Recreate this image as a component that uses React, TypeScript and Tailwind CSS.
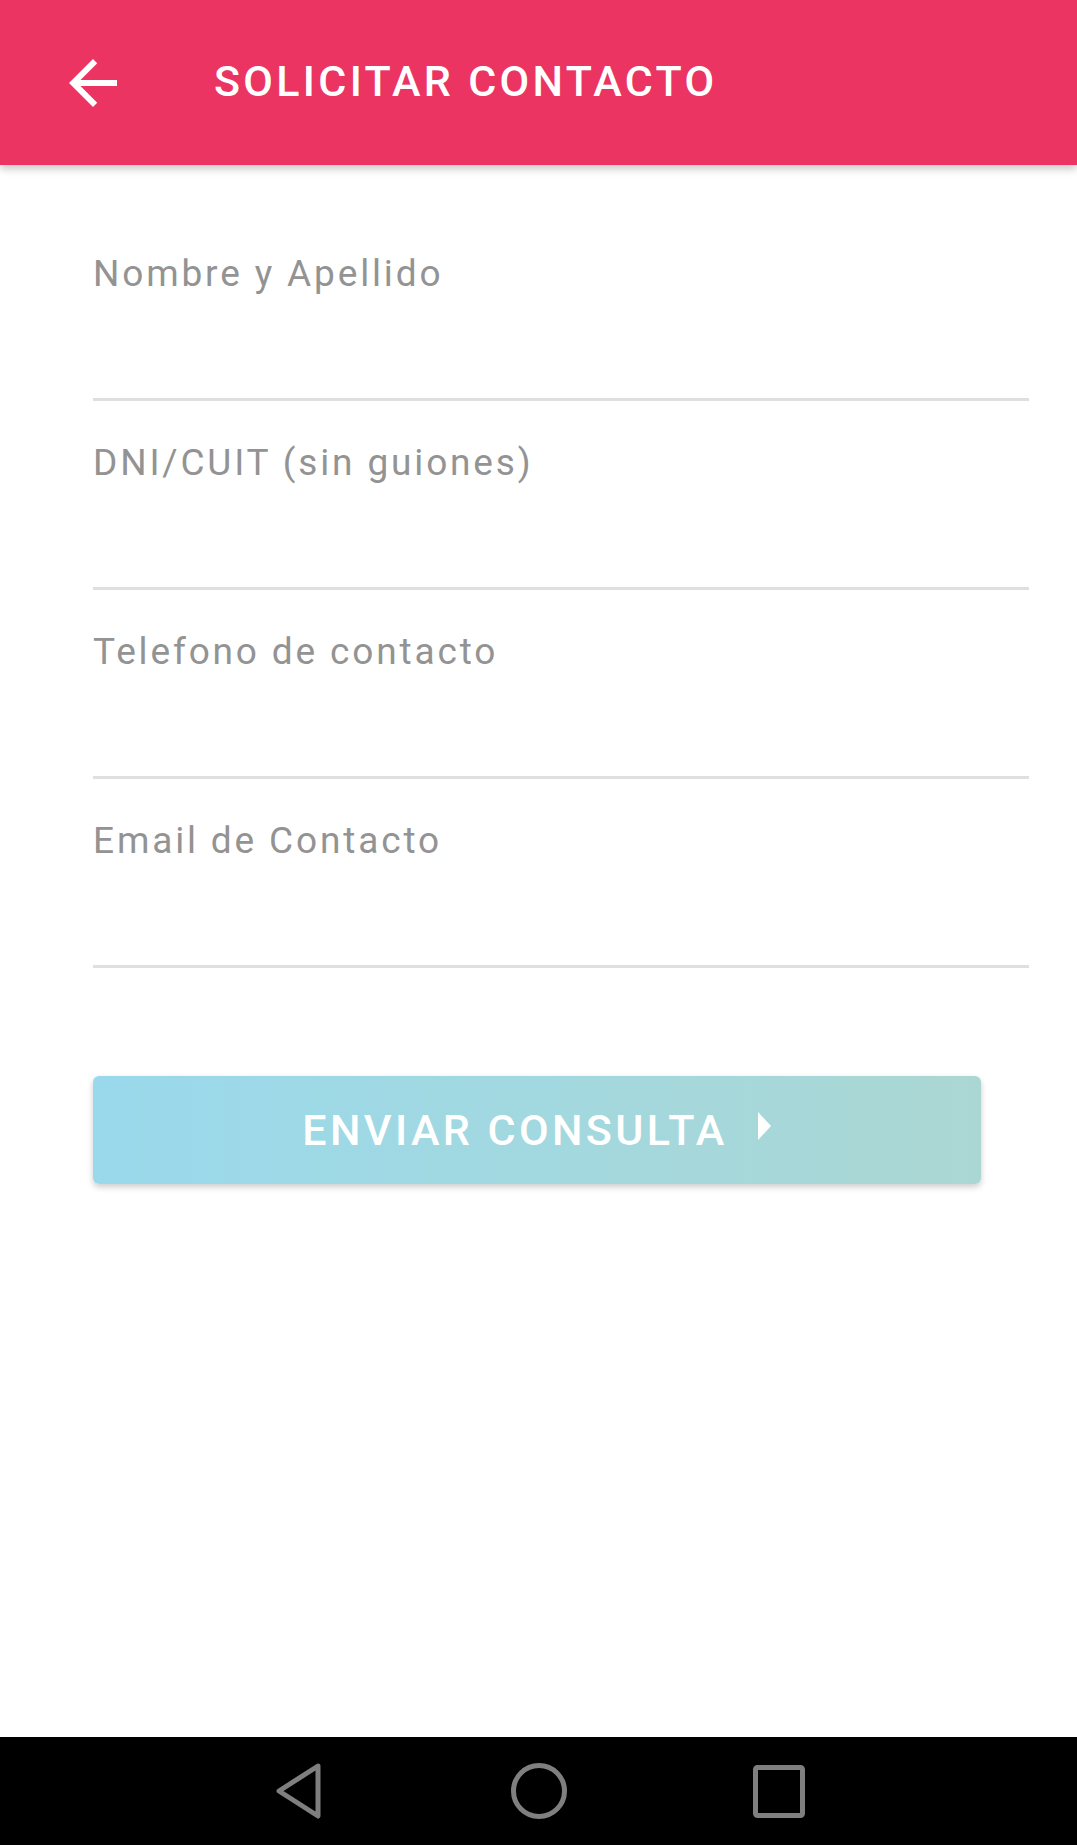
import React from 'react';

const fields = [
  'Nombre y Apellido',
  'DNI/CUIT (sin guiones)',
  'Telefono de contacto',
  'Email de Contacto',
];

const BackArrow: React.FC = () => (
  <svg width="72" height="72" viewBox="0 0 24 24" fill="#ffffff">
    <path d="M20 11H7.83l5.59-5.59L12 4l-8 8 8 8 1.41-1.41L7.83 13H20v-2z" />
  </svg>
);

const App: React.FC = () => {
  return (
    <div
      className="w-full h-[1845px] flex flex-col bg-white overflow-hidden"
      style={{ fontFamily: 'Roboto, "Noto Sans", sans-serif' }}
    >
      <header className="relative z-10 h-[165px] shrink-0 bg-[#eb3461] flex items-center pl-[57px] shadow-[0_4px_8px_rgba(0,0,0,0.22)]">
        <BackArrow />
        <h1 className="ml-[85px] text-[43px] leading-none font-medium text-white tracking-[3.3px] mb-[3px]">
          SOLICITAR CONTACTO
        </h1>
      </header>

      <main className="flex-1 pt-[47px] pl-[93px] pr-[48px]">
        {fields.map((label) => (
          <div key={label} className="h-[189px] pt-[43px] border-b-[3px] border-[#dfdfdf]">
            <label className="block text-[37px] leading-[37px] text-[#939393] tracking-[2.85px]">
              {label}
            </label>
          </div>
        ))}

        <button
          type="button"
          className="mt-[108px] w-[888px] h-[108px] rounded-[6px] bg-linear-to-r from-[#99d9ec] to-[#abd7d3] shadow-[0_3px_6px_rgba(0,0,0,0.2)] flex items-center justify-center"
        >
          <span className="text-[43px] leading-none font-medium text-white tracking-[3.4px]">
            ENVIAR CONSULTA
          </span>
          <svg width="14" height="28" viewBox="0 0 14 28" className="ml-[30px] mb-[8px]" fill="#ffffff">
            <path d="M0 0L13 14L0 28Z" />
          </svg>
        </button>
      </main>

      <nav className="h-[108px] shrink-0 bg-black flex items-center justify-center">
        <div className="w-[240px] flex justify-center">
          <svg width="51" height="58" viewBox="0 0 51 58" fill="none" stroke="#7f7f7f" strokeWidth="5" strokeLinejoin="round">
            <path d="M45 4L6 29L45 54Z" />
          </svg>
        </div>
        <div className="w-[240px] flex justify-center">
          <svg width="58" height="58" viewBox="0 0 58 58" fill="none" stroke="#7f7f7f" strokeWidth="5">
            <circle cx="29" cy="29" r="25.5" />
          </svg>
        </div>
        <div className="w-[240px] flex justify-center">
          <svg width="52" height="53" viewBox="0 0 52 53" fill="none" stroke="#7f7f7f" strokeWidth="5">
            <rect x="2.5" y="2.5" width="47" height="48" rx="2" />
          </svg>
        </div>
      </nav>
    </div>
  );
};

export default App;
